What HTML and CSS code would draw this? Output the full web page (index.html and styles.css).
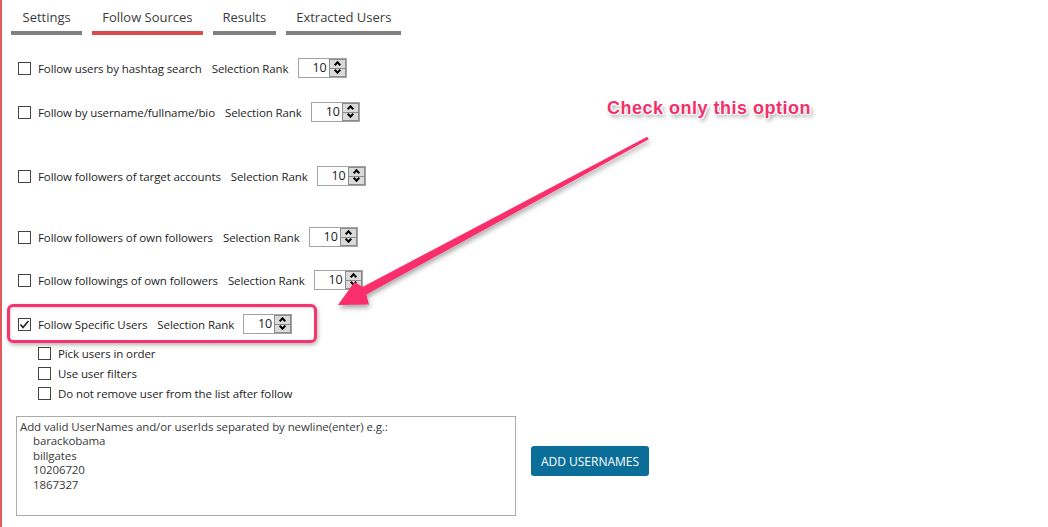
FILE: index.html
```html
<!DOCTYPE html>
<html>
<head>
<meta charset="utf-8">
<link rel="stylesheet" href="styles.css">
</head>
<body>
<div class="page">
  <nav class="tabs">
    <div class="tab tab-first">Settings</div>
    <div class="tab active">Follow Sources</div>
    <div class="tab">Results</div>
    <div class="tab">Extracted Users</div>
  </nav>

  <div class="options">
    <div class="opt opt-1">
      <span class="cb"></span><span class="lbl">Follow users by hashtag search</span>
      <span class="rank">Selection Rank</span>
      <div class="spin"><span class="val">10</span><span class="btns"><span class="up"></span><span class="down"></span></span></div>
    </div>
    <div class="opt opt-2">
      <span class="cb"></span><span class="lbl">Follow by username/fullname/bio</span>
      <span class="rank">Selection Rank</span>
      <div class="spin"><span class="val">10</span><span class="btns"><span class="up"></span><span class="down"></span></span></div>
    </div>
    <div class="opt opt-3">
      <span class="cb"></span><span class="lbl">Follow followers of target accounts</span>
      <span class="rank">Selection Rank</span>
      <div class="spin"><span class="val">10</span><span class="btns"><span class="up"></span><span class="down"></span></span></div>
    </div>
    <div class="opt opt-4">
      <span class="cb"></span><span class="lbl">Follow followers of own followers</span>
      <span class="rank">Selection Rank</span>
      <div class="spin"><span class="val">10</span><span class="btns"><span class="up"></span><span class="down"></span></span></div>
    </div>
    <div class="opt opt-5">
      <span class="cb"></span><span class="lbl">Follow followings of own followers</span>
      <span class="rank">Selection Rank</span>
      <div class="spin"><span class="val">10</span><span class="btns"><span class="up"></span><span class="down"></span></span></div>
    </div>
    <div class="opt opt-6 hl">
      <span class="cb checked"><svg viewBox="0 0 13 13" width="13" height="13"><path d="M2.5 6.5 L5 9.5 L10.5 3" fill="none" stroke="#222" stroke-width="1.6"/></svg></span><span class="lbl">Follow Specific Users</span>
      <span class="rank">Selection Rank</span>
      <div class="spin"><span class="val">10</span><span class="btns"><span class="up"></span><span class="down"></span></span></div>
    </div>
  </div>

  <div class="sub">
    <div class="subopt"><span class="cb"></span><span class="lbl">Pick users in order</span></div>
    <div class="subopt"><span class="cb"></span><span class="lbl">Use user filters</span></div>
    <div class="subopt"><span class="cb"></span><span class="lbl">Do not remove user from the list after follow</span></div>
  </div>

  <div class="bottom">
    <div class="ta">
      <div>Add valid UserNames and/or userIds separated by newline(enter) e.g.:</div>
      <div class="ind">barackobama</div>
      <div class="ind">billgates</div>
      <div class="ind">10206720</div>
      <div class="ind">1867327</div>
    </div>
    <button class="btn">ADD USERNAMES</button>
  </div>

  <div class="callout">Check only this option</div>
  <svg class="arrow" width="1048" height="527" viewBox="0 0 1048 527">
    <defs>
      <filter id="sh" x="-10%" y="-10%" width="120%" height="130%">
        <feDropShadow dx="1" dy="3" stdDeviation="2.5" flood-color="#000" flood-opacity="0.35"/>
      </filter>
    </defs>
    <polygon filter="url(#sh)" fill="#fb2d6c" points="647.3,136.7 362.5,287 354.5,282 338,305 369,304.5 366.3,294.6 648.7,139.3"/>
  </svg>
</div>
</body>
</html>
```
FILE: styles.css
```css
*, *::before, *::after { box-sizing: border-box; }
html, body { margin: 0; padding: 0; background: #fff; }
body {
  font-family: "Open Sans", "Noto Sans", sans-serif;
  font-size: 11.5px;
  letter-spacing: -0.1px;
  color: #1e1e1e;
}
.page {
  position: relative;
  width: 1048px;
  height: 527px;
  border-left: 2px solid #e05a5a;
  overflow: hidden;
}
.tabs {
  display: flex;
  gap: 10px;
  padding: 9px 0 0 9px;
}
.tab {
  padding: 0 10px 5px;
  font-size: 13px;
  letter-spacing: 0;
  line-height: 17px;
  color: #3c3c3c;
  border-bottom: 4px solid #808080;
}
.tab-first { padding-left: 11.5px; padding-right: 11.5px; }
.tab.active { border-bottom-color: #d94c4c; }

.options { padding-left: 16px; }
.opt {
  display: flex;
  align-items: center;
  height: 20px;
}
.opt-1 { margin-top: 23px; }
.opt-2 { margin-top: 24px; }
.opt-3 { margin-top: 44px; }
.opt-4 { margin-top: 41px; }
.opt-5 { margin-top: 23px; }
.opt-6 { margin-top: 24px; }

.cb {
  width: 13px;
  height: 13px;
  border: 1px solid #444;
  background: #fff;
  flex: none;
  display: inline-flex;
}
.cb svg { margin: -1px; }
.lbl { margin-left: 7px; white-space: nowrap; padding-top: 1px; }
.rank { margin-left: 10px; white-space: nowrap; }
.spin {
  margin-left: 9px;
  display: flex;
  width: 49px;
  height: 20px;
  border: 1px solid #a3a3a3;
  background: #fff;
}
.val {
  flex: 1;
  text-align: right;
  padding-right: 2px;
  line-height: 18px;
  font-size: 12.5px;
  color: #222;
}
.btns {
  width: 17px;
  display: flex;
  flex-direction: column;
}
.up, .down {
  flex: 1;
  background: #dadada;
  border: 1px solid #8c8c8c;
  position: relative;
}
.down { border-top: none; }
.up::before, .down::before {
  content: "";
  position: absolute;
  left: 5px;
  width: 5px;
  height: 5px;
  border-left: 2px solid #000;
  border-top: 2px solid #000;
  transform: rotate(45deg);
}
.up::before { top: 2px; }
.down::before { top: -1px; transform: rotate(225deg); }

.hl { position: relative; }
.hl::after {
  content: "";
  position: absolute;
  left: -11px;
  top: -10px;
  width: 310px;
  height: 39px;
  border: 3px solid #f5336e;
  border-radius: 6px;
  box-shadow: 1px 2px 4px rgba(0, 0, 0, 0.3), inset 1px 1px 3px rgba(0, 0, 0, 0.15);
}

.sub { padding-left: 36px; margin-top: 9px; }
.subopt {
  display: flex;
  align-items: center;
  height: 20px;
}

.bottom {
  display: flex;
  align-items: flex-start;
  margin-top: 13px;
  padding-left: 14px;
}
.ta {
  width: 500px;
  height: 100px;
  border: 1px solid #ababab;
  padding: 3px 3px;
  line-height: 14.4px;
  color: #3a3a3a;
}
.ind { padding-left: 13px; }
.btn {
  margin: 30px 0 0 15px;
  width: 118px;
  height: 30px;
  border: none;
  border-radius: 3px;
  background: #0b6e99;
  color: #fff;
  font-family: "Open Sans", "Noto Sans", sans-serif;
  font-size: 12px;
  letter-spacing: 0;
  padding: 0;
}

.callout {
  position: absolute;
  left: 605px;
  top: 98px;
  font-family: "Liberation Sans", Arial, sans-serif;
  font-weight: bold;
  font-size: 18px;
  letter-spacing: 0.5px;
  line-height: 20px;
  color: #f2306b;
  white-space: nowrap;
  text-shadow: 1px 0 0 #fff, -1px 0 0 #fff, 0 1px 0 #fff, 0 -1px 0 #fff,
    1px 1px 0 #fff, -1px -1px 0 #fff, 1px -1px 0 #fff, -1px 1px 0 #fff,
    2px 3px 4px rgba(0, 0, 0, 0.45);
}
.arrow {
  position: absolute;
  left: -2px;
  top: 0;
  pointer-events: none;
}
```
